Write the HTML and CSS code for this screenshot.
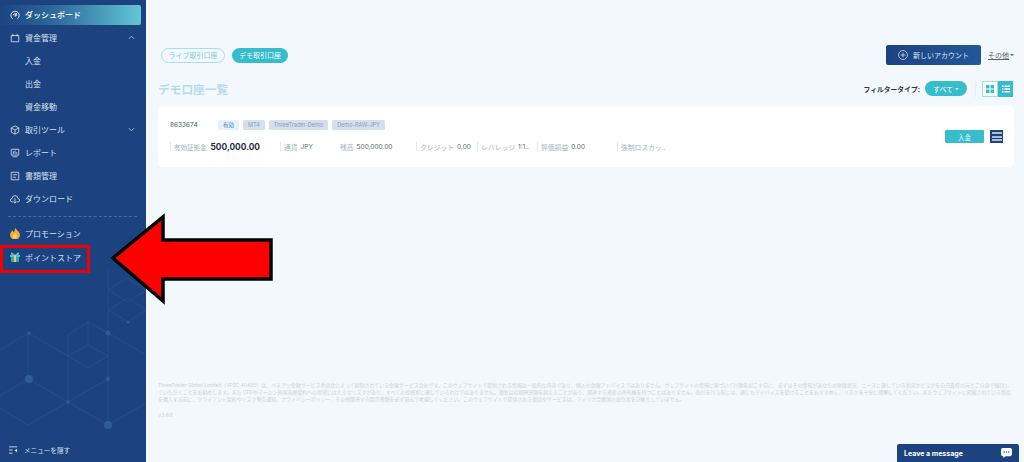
FILE: index.html
```html
<!DOCTYPE html>
<html lang="ja">
<head>
    <meta charset="UTF-8">
    <meta name="viewport" content="width=device-width, initial-scale=1.0">
    <title>デモ口座一覧</title>
    <link rel="stylesheet" href="styles.css">
</head>
<body>
    <div class="page">
        <aside class="sidebar">
            <svg class="side-bg" width="146" height="192" viewBox="0 270 146 192" fill="none">
                <g stroke="#2f5690" stroke-width="0.6">
                    <path d="M108 270V425M108 290L127 278L146 290L127 302ZM108 310L128 298L146 310L128 322Z"/>
                    <path d="M0 350L28 333L68 356L88 345L108 356L88 368L68 356M68 335V402M68 335L88 322V345M88 322L108 333L146 355"/>
                    <path d="M28 333V379M0 396L28 379L68 402L108 379M68 402L28 425L0 408M68 402L108 425L146 403"/>
                </g>
                <g fill="#2f5c98">
                    <circle cx="29" cy="379" r="4"/>
                    <circle cx="108" cy="425" r="4"/>
                    <circle cx="108" cy="333" r="2.500"/>
                    <circle cx="108" cy="379" r="2"/>
                    <circle cx="29" cy="333" r="1.800"/>
                    <circle cx="68" cy="402" r="1.800"/>
                    <circle cx="128" cy="322" r="1.500"/>
                </g>
            </svg>
            <nav class="nav">
                <a class="nav-item active">
                    <svg class="nav-icon" viewBox="0 0 12 12" fill="none" stroke="#fff"><path d="M3 10.500A5 5 0 1 1 9 10.500"/><path d="M4 6.500A2 2 0 0 1 8 6.500L6 7.500L8 3.500"/></svg>
                    ダッシュボード
                </a>
                <a class="nav-item">
                    <svg class="nav-icon" viewBox="0 0 12 12" fill="none" stroke="#d5e0ee"><path d="M1.500 3H10.500V10.500H1.500Z"/><path d="M3.500 1V4M8.500 1V4"/></svg>
                    資金管理
                    <svg class="chev" viewBox="0 0 8 5" fill="none" stroke="#d5e0ee"><path d="M1 4L4 1L7 4"/></svg>
                </a>
                <a class="nav-item sub">入金</a>
                <a class="nav-item sub">出金</a>
                <a class="nav-item sub">資金移動</a>
                <a class="nav-item">
                    <svg class="nav-icon" viewBox="0 0 12 12" fill="none" stroke="#d5e0ee"><path d="M6 1L10.500 3.500V8.500L6 11L1.500 8.500V3.500Z"/><path d="M1.500 3.500L6 6L10.500 3.500M6 6V11"/></svg>
                    取引ツール
                    <svg class="chev" viewBox="0 0 8 5" fill="none" stroke="#d5e0ee"><path d="M1 1L4 4L7 1"/></svg>
                </a>
                <a class="nav-item">
                    <svg class="nav-icon" viewBox="0 0 12 12" fill="none" stroke="#d5e0ee"><path d="M1.500 1.500H10.500V8.500H1.500Z"/><path d="M4 7V4M6 7V3M8 7V5M3 10.500H9"/></svg>
                    レポート
                </a>
                <a class="nav-item">
                    <svg class="nav-icon" viewBox="0 0 12 12" fill="none" stroke="#d5e0ee"><path d="M1.500 1.500H10.500V10.500H1.500Z"/><path d="M3.500 4.500H8.500M3.500 7.500H7"/></svg>
                    書類管理
                </a>
                <a class="nav-item">
                    <svg class="nav-icon" viewBox="0 0 12 12" fill="none" stroke="#d5e0ee"><path d="M3.500 9.500H2.500A2 2 0 0 1 2.500 5.500A3.500 3.500 0 0 1 9.500 5.500A2 2 0 0 1 9.500 9.500H8.500"/><path d="M6 5V11M4 9L6 11L8 9"/></svg>
                    ダウンロード
                </a>
                <div class="nav-divider"></div>
                <a class="nav-item promo">
                    <svg class="nav-icon nav-icon-lg" viewBox="0 0 12 12"><path d="M6 0.500C7 3 11 4.500 11 8A5 4.500 0 0 1 1 8C1 6 2.500 5 3 3.500C4 4 4.500 5 4.500 5.500C5.500 4 6.300 2.500 6 0.500Z" fill="#f4ab2f"/><path d="M6 6C6.500 7.500 8 8 8 9.500A2 2 0 0 1 4 9.500C4 8 5.500 7.500 6 6Z" fill="#fbd774"/></svg>
                    プロモーション
                </a>
                <a class="nav-item">
                    <svg class="nav-icon nav-icon-lg" viewBox="0 0 12 12"><path d="M1 4H11V6H1Z" fill="#4cc3cf"/><path d="M2 6H10V11H2Z" fill="#35a5b8"/><path d="M5 4H7V11H5Z" fill="#f2cf63"/><path d="M6 4L2.500 1.200L2 3.500ZM6 4L9.500 1.200L10 3.500Z" fill="#7fdbe0"/></svg>
                    ポイントストア
                </a>
            </nav>
            <a class="collapse">
                <svg class="collapse-icon" viewBox="0 0 10 8" fill="none" stroke="#d5e0ee"><path d="M0 0.500H9M0 4H4M0 7.500H4"/><path d="M9 2.500V6.500L6 4.500Z" fill="#d5e0ee" stroke="none"/></svg>
                メニューを隠す
            </a>
        </aside>

        <main class="main">
            <div class="top-row">
                <div class="tabs">
                    <span class="tab">ライブ取引口座</span>
                    <span class="tab tab-on">デモ取引口座</span>
                </div>
                <div class="top-right">
                    <button class="new-btn">
                        <svg class="plus" viewBox="0 0 10 10" fill="none" stroke="#dfe8f4" stroke-width="0.7"><circle cx="5" cy="5" r="4.500"/><path d="M5 2.500V7.500M2.500 5H7.500"/></svg>
                        新しいアカウント
                    </button>
                    <span class="other">その他</span><span class="caret-dark"></span>
                </div>
            </div>

            <div class="title-row">
                <h1 class="title">デモ口座一覧</h1>
                <div class="filter">
                    <span class="filter-label">フィルタータイプ:</span>
                    <span class="filter-pill">すべて <i class="caret"></i></span>
                    <span class="filter-line"></span>
                    <div class="views">
                        <span class="view">
                            <svg viewBox="0 0 8 8" fill="#36bccb"><path d="M0 0H3.500V3.500H0ZM4.500 0H8V3.500H4.500ZM0 4.500H3.500V8H0ZM4.500 4.500H8V8H4.500Z"/></svg>
                        </span>
                        <span class="view view-on">
                            <svg viewBox="0 0 8 8" fill="#fff"><path d="M0 0.500H1.500V2H0ZM2.500 0.500H8V2H2.500ZM0 3.300H1.500V4.800H0ZM2.500 3.300H8V4.800H2.500ZM0 6H1.500V7.500H0ZM2.500 6H8V7.500H2.500Z"/></svg>
                        </span>
                    </div>
                </div>
            </div>

            <section class="card">
                <div class="card-body">
                    <div class="badges">
                        <span class="acc-no">8633674</span>
                        <span class="badge badge-ok">有効</span>
                        <span class="badge">MT4</span>
                        <span class="badge">ThreeTrader-Demo</span>
                        <span class="badge">Demo-RAW-JPY</span>
                    </div>
                    <div class="stats">
                        <div class="stat"><span class="lbl lbl-sm">有効証拠金</span><b class="big">500,000.00</b></div>
                        <div class="stat"><span class="lbl">通貨</span><span class="val">JPY</span></div>
                        <div class="stat no-line"><span class="lbl">残高</span><span class="val">500,000.00</span></div>
                        <div class="stat"><span class="lbl">クレジット</span><span class="val">0.00</span></div>
                        <div class="stat"><span class="lbl">レバレッジ</span><span class="val">1:1..</span></div>
                        <div class="stat"><span class="lbl">評価損益</span><span class="val">0.00</span></div>
                        <div class="stat"><span class="lbl">強制ロスカッ..</span></div>
                    </div>
                </div>
                <div class="card-actions">
                    <span class="deposit">入金</span>
                    <span class="more"><i></i><i></i><i></i></span>
                </div>
            </section>

            <footer class="legal">
                <p>ThreeTrader Global Limited（VFSC 40430）は、バヌアツ金融サービス委員会によって規制されている金融サービス会社です。このウェブサイトで提供される情報は一般的な内容であり、個人の金融アドバイスではありません。ウェブサイトの情報に基づいて行動を起こす前に、まずはその情報があなたの財政状況、ニーズに適している状況かどうかを自己責任の元とご自身で検討していただくことをお勧めします。また CFDやマージン外国為替契約への投資には大きなリスクがあり、すべての投資家に適しているわけではありません。損失は初期預託額を超えることがあり、関連する資産の所有権を持つことはありません。取引を行う前には、適したアドバイスを受けることをおすすめし、リスクを十分に理解してください。またウェブサイトに掲載されている製品を購入する前に、クライアント契約やリスク警告通知、プライバシーポリシー、その他関連する開示書類を必ず読んで考慮してください。このウェブサイトで提供される製品やサービスは、アメリカ合衆国の居住者を対象としていません。</p>
                <p class="version">V3.6.6</p>
            </footer>
        </main>
    </div>

    <div class="chat">
        Leave a message
        <svg class="chat-icon" viewBox="0 0 12 11"><path d="M2 0H10A2 2 0 0 1 12 2V7A2 2 0 0 1 10 9H5L2.500 11V9H2A2 2 0 0 1 0 7V2A2 2 0 0 1 2 0Z" fill="#fff"/><circle cx="3.500" cy="4.500" r="0.800" fill="#1c4380"/><circle cx="6" cy="4.500" r="0.800" fill="#1c4380"/><circle cx="8.500" cy="4.500" r="0.800" fill="#1c4380"/></svg>
    </div>

    <!-- annotation drawn over the screenshot -->
    <svg class="annot" width="1024" height="462" viewBox="0 0 1024 462">
        <rect x="1.500" y="246.500" width="87" height="25" fill="none" stroke="#f00000" stroke-width="3"/>
        <path d="M113 258L163 217V240H271V279H163V301Z" fill="#ff0000" stroke="#000" stroke-width="3.500" stroke-linejoin="miter"/>
    </svg>
</body>
</html>
```

FILE: styles.css
```css
* {
    box-sizing: border-box;
}
body {
    margin: 0;
    height: 462px;
    overflow: hidden;
    background: #f2f8fe;
    font-family: "Inter", "Noto Sans CJK JP", sans-serif;
    position: relative;
}
.page {
    display: flex;
    height: 462px;
}

/* sidebar */
.sidebar {
    width: 146px;
    flex: none;
    background: #1c4380;
    position: relative;
    display: flex;
    flex-direction: column;
    padding-top: 5px;
}
.side-bg {
    position: absolute;
    left: 0;
    bottom: 0;
}
.nav {
    position: relative;
    display: flex;
    flex-direction: column;
}
.nav-item {
    height: 23px;
    display: flex;
    align-items: center;
    gap: 5px;
    padding: 0 11px 1px 10px;
    font-size: 8px;
    color: #d5e0ee;
    white-space: nowrap;
}
.nav-item.active {
    height: 20px;
    margin: 0 5px 1.500px 0;
    padding-right: 5px;
    border-radius: 0 2px 2px 0;
    color: #fff;
    font-weight: 500;
    background: linear-gradient(90deg, #1c4380 0%, #2e6b9d 40%, #62c6d6 100%);
}
.nav-item.sub {
    padding-left: 25px;
}
.nav-item.promo {
    margin-bottom: 1px;
}
.nav-icon {
    width: 10px;
    height: 10px;
    flex: none;
}
.nav-icon-lg {
    width: 12px;
    height: 12px;
    margin-left: -1px;
    margin-right: -1px;
}
.chev {
    width: 7px;
    height: 5px;
    margin-left: auto;
    stroke-width: 0.800;
}
.nav-divider {
    border-top: 1px dashed #4a6c9e;
    margin: 5.500px 9px 5px 8px;
}
.collapse {
    position: relative;
    margin-top: auto;
    height: 24px;
    display: flex;
    align-items: center;
    gap: 6px;
    padding-left: 9px;
    font-size: 6.600px;
    color: #d5e0ee;
}
.collapse-icon {
    width: 9px;
    height: 8px;
}

/* main */
.main {
    flex: 1;
    min-width: 0;
    padding: 45px 10px 0 12px;
    display: flex;
    flex-direction: column;
}
.top-row {
    display: flex;
    justify-content: space-between;
    align-items: center;
    height: 20px;
}
.tabs {
    display: flex;
    gap: 7px;
    padding-left: 3px;
}
.tab {
    height: 15px;
    width: 64px;
    display: flex;
    align-items: center;
    justify-content: center;
    border: 1px solid #a8dfe6;
    border-radius: 8px;
    font-size: 7px;
    color: #7ccbd7;
}
.tab-on {
    width: 56px;
    border: 0;
    color: #fff;
    background: #36bccb;
}
.top-right {
    display: flex;
    align-items: center;
}
.new-btn {
    width: 95px;
    height: 20px;
    border: 0;
    border-radius: 2px;
    background: linear-gradient(90deg, #1c4380, #24569b);
    color: #dfe8f4;
    font: inherit;
    font-size: 7px;
    display: flex;
    align-items: center;
    justify-content: center;
    gap: 5px;
    margin-right: 7px;
}
.plus {
    width: 10px;
    height: 10px;
}
.other {
    font-size: 7px;
    color: #55606f;
    text-decoration: underline;
}
.caret-dark {
    margin-left: 1px;
    border: 2px solid transparent;
    border-top-color: #55606f;
    border-bottom: 0;
}
.title-row {
    display: flex;
    justify-content: space-between;
    align-items: center;
    height: 17px;
    margin-top: 15px;
}
.title {
    margin: 0;
    font-size: 11.700px;
    font-weight: 700;
    color: #b6dcec;
}
.filter {
    display: flex;
    align-items: center;
    padding-right: 1px;
}
.filter-label {
    font-size: 6.800px;
    font-weight: 700;
    color: #2b3a4d;
    margin-right: 5px;
}
.filter-pill {
    width: 42px;
    height: 15px;
    border-radius: 8px;
    background: #36bccb;
    color: #fff;
    font-size: 7px;
    display: flex;
    align-items: center;
    justify-content: center;
    gap: 2px;
}
.caret {
    border: 2px solid transparent;
    border-top-color: #fff;
    border-bottom: 0;
}
.filter-line {
    width: 1px;
    height: 16px;
    background: #e6edf3;
    margin: 0 6px 0 8px;
}
.views {
    display: flex;
}
.view {
    width: 16px;
    height: 16px;
    border: 1px solid #9fe0e6;
    background: #fff;
    display: flex;
    align-items: center;
    justify-content: center;
}
.view svg {
    width: 8px;
    height: 8px;
}
.view-on {
    width: 15px;
    background: #36bccb;
    border-color: #36bccb;
}

/* account card */
.card {
    height: 61px;
    margin-top: 9px;
    background: #fff;
    border-radius: 4px;
    padding: 14px 11px 0 12px;
    display: flex;
    justify-content: space-between;
}
.badges {
    display: flex;
    align-items: center;
    height: 10px;
    gap: 4px;
}
.acc-no {
    width: 44px;
    font-size: 6.500px;
    color: #4a5666;
}
.badge {
    height: 10px;
    padding: 0 5px;
    display: flex;
    align-items: center;
    border-radius: 1.500px;
    background: #d5e0ec;
    color: #8e9db0;
    font-size: 5.500px;
    white-space: nowrap;
}
.badge-ok {
    background: #e6f2fb;
    color: #3f79ad;
}
.stats {
    display: grid;
    grid-template-columns: 110px 56px 80px 61px 60px 80px 60px;
    margin-top: 11px;
    height: 11px;
    align-items: center;
}
.stat {
    display: flex;
    align-items: center;
    gap: 3px;
    height: 9px;
    border-left: 1px solid #e4e8ed;
    padding-left: 3px;
    white-space: nowrap;
}
.no-line {
    border-left-color: transparent;
}
.lbl {
    font-size: 6.800px;
    color: #a8b0ba;
}
.lbl-sm {
    font-size: 6.500px;
}
.val {
    font-size: 6.500px;
    color: #5a6676;
}
.big {
    font-size: 8.400px;
    font-weight: 700;
    color: #1f2d4a;
    margin-left: 1px;
}
.card-actions {
    display: flex;
    gap: 6px;
    padding-top: 10px;
}
.deposit {
    width: 39px;
    height: 13px;
    border-radius: 1px;
    background: #36bccb;
    color: #e6fbfc;
    font-size: 6.500px;
    display: flex;
    align-items: center;
    justify-content: center;
}
.more {
    width: 13px;
    height: 13px;
    background: #1c4380;
    padding: 2px 1.500px;
    display: flex;
    flex-direction: column;
    justify-content: space-between;
}
.more i {
    height: 2px;
    background: #a9bdd6;
}

/* legal text */
.legal {
    margin-top: 215px;
    font-size: 4.940px;
    line-height: 7px;
    color: #c9d1da;
}
.legal p {
    margin: 0;
}
.legal .version {
    margin-top: 9px;
}

/* chat tab */
.chat {
    position: absolute;
    right: 5px;
    bottom: 0;
    width: 122px;
    height: 18px;
    padding: 0 7px;
    border-radius: 2px 2px 0 0;
    background: #1c4380;
    color: #fff;
    font-size: 7px;
    font-weight: 700;
    display: flex;
    align-items: center;
    justify-content: space-between;
}
.chat-icon {
    width: 11px;
    height: 10px;
}

.annot {
    position: absolute;
    left: 0;
    top: 0;
}
```
